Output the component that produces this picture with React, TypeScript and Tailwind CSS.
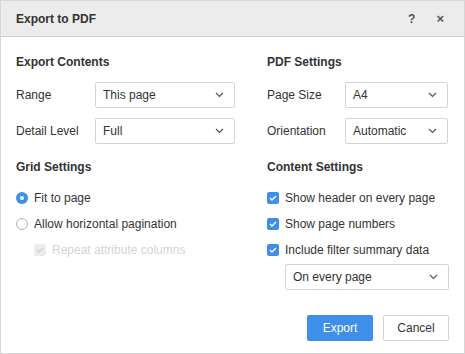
import type { ReactNode } from 'react';

const BLUE = 'bg-[#3d8fe9]';

function Chevron() {
  return (
    <svg width="9" height="6" viewBox="0 0 9 6" className="shrink-0">
      <path d="M1 1l3.5 3.5L8 1" fill="none" stroke="#555" strokeWidth="1.2" />
    </svg>
  );
}

function Select({ value, className }: { value: string; className?: string }) {
  return (
    <div
      className={`h-[26px] border border-[#d4d4d4] rounded-[2px] bg-white flex items-center justify-between pl-[7px] pr-[10px] text-[#333] ${className ?? ''}`}
    >
      <span>{value}</span>
      <Chevron />
    </div>
  );
}

function FieldRow({ label, labelWidth, children }: { label: string; labelWidth: string; children: ReactNode }) {
  return (
    <div className="flex items-center">
      <span className={`${labelWidth} shrink-0`}>{label}</span>
      {children}
    </div>
  );
}

function SectionTitle({ children }: { children: ReactNode }) {
  return <h3 className="font-bold text-[12px] leading-[16px] text-[#333]">{children}</h3>;
}

function Radio({ checked, label }: { checked?: boolean; label: string }) {
  return (
    <div className="h-[26px] flex items-center gap-[6px]">
      {checked ? (
        <span className={`w-[12px] h-[12px] rounded-full ${BLUE} flex items-center justify-center`}>
          <span className="w-[4px] h-[4px] rounded-full bg-white" />
        </span>
      ) : (
        <span className="w-[12px] h-[12px] rounded-full border border-[#b5b5b5] bg-white" />
      )}
      <span>{label}</span>
    </div>
  );
}

function Checkbox({ label, disabled }: { label: string; disabled?: boolean }) {
  return (
    <div className={`h-[26px] flex items-center gap-[6px] ${disabled ? 'text-[#d4d4d4]' : ''}`}>
      <span
        className={`w-[12px] h-[12px] rounded-[2px] flex items-center justify-center ${
          disabled ? 'bg-[#ececec]' : BLUE
        }`}
      >
        <svg width="8" height="6" viewBox="0 0 8 6">
          <path
            d="M1 3l2 2 4-4"
            fill="none"
            stroke={disabled ? '#d0d0d0' : '#fff'}
            strokeWidth="1.4"
          />
        </svg>
      </span>
      <span>{label}</span>
    </div>
  );
}

export default function App() {
  return (
    <div className="w-[465px] h-[354px] bg-white border border-[#d6d6d6] flex flex-col font-['Liberation_Sans',Arial,sans-serif] text-[12px] text-[#333]">
      {/* Header */}
      <div className="h-[36px] shrink-0 bg-[#ececec] border-b border-[#d2d2d2] flex items-center pl-[15px] pr-[20px]">
        <h2 className="font-bold text-[12px] flex-1">Export to PDF</h2>
        <span className="font-bold text-[#555] text-[12px] mr-[21px]">?</span>
        <span className="font-bold text-[#555] text-[13px]">×</span>
      </div>

      {/* Body */}
      <div className="flex pl-[15px] pt-[17px] gap-[32px]">
        <div className="w-[219px] flex flex-col">
          <SectionTitle>Export Contents</SectionTitle>
          <div className="mt-[12px] flex flex-col gap-[10px]">
            <FieldRow label="Range" labelWidth="w-[79px]">
              <Select value="This page" className="flex-1" />
            </FieldRow>
            <FieldRow label="Detail Level" labelWidth="w-[79px]">
              <Select value="Full" className="flex-1" />
            </FieldRow>
          </div>
          <div className="mt-[15px]">
            <SectionTitle>Grid Settings</SectionTitle>
          </div>
          <div className="mt-[10px] flex flex-col">
            <Radio checked label="Fit to page" />
            <Radio label="Allow horizontal pagination" />
            <div className="pl-[18px]">
              <Checkbox disabled label="Repeat attribute columns" />
            </div>
          </div>
        </div>

        <div className="w-[181px] flex flex-col">
          <SectionTitle>PDF Settings</SectionTitle>
          <div className="mt-[12px] flex flex-col gap-[10px]">
            <FieldRow label="Page Size" labelWidth="w-[78px]">
              <Select value="A4" className="flex-1" />
            </FieldRow>
            <FieldRow label="Orientation" labelWidth="w-[78px]">
              <Select value="Automatic" className="flex-1" />
            </FieldRow>
          </div>
          <div className="mt-[15px]">
            <SectionTitle>Content Settings</SectionTitle>
          </div>
          <div className="mt-[10px] flex flex-col">
            <Checkbox label="Show header on every page" />
            <Checkbox label="Show page numbers" />
            <Checkbox label="Include filter summary data" />
            <Select value="On every page" className="ml-[18px] mt-px w-[164px]" />
          </div>
        </div>
      </div>

      {/* Footer */}
      <div className="mt-auto flex justify-end gap-[10px] pr-[15px] pb-[12px]">
        <button className={`w-[66px] h-[26px] rounded-[2px] ${BLUE} text-white`}>Export</button>
        <button className="w-[66px] h-[26px] rounded-[2px] border border-[#d4d4d4] bg-white text-[#333]">
          Cancel
        </button>
      </div>
    </div>
  );
}
